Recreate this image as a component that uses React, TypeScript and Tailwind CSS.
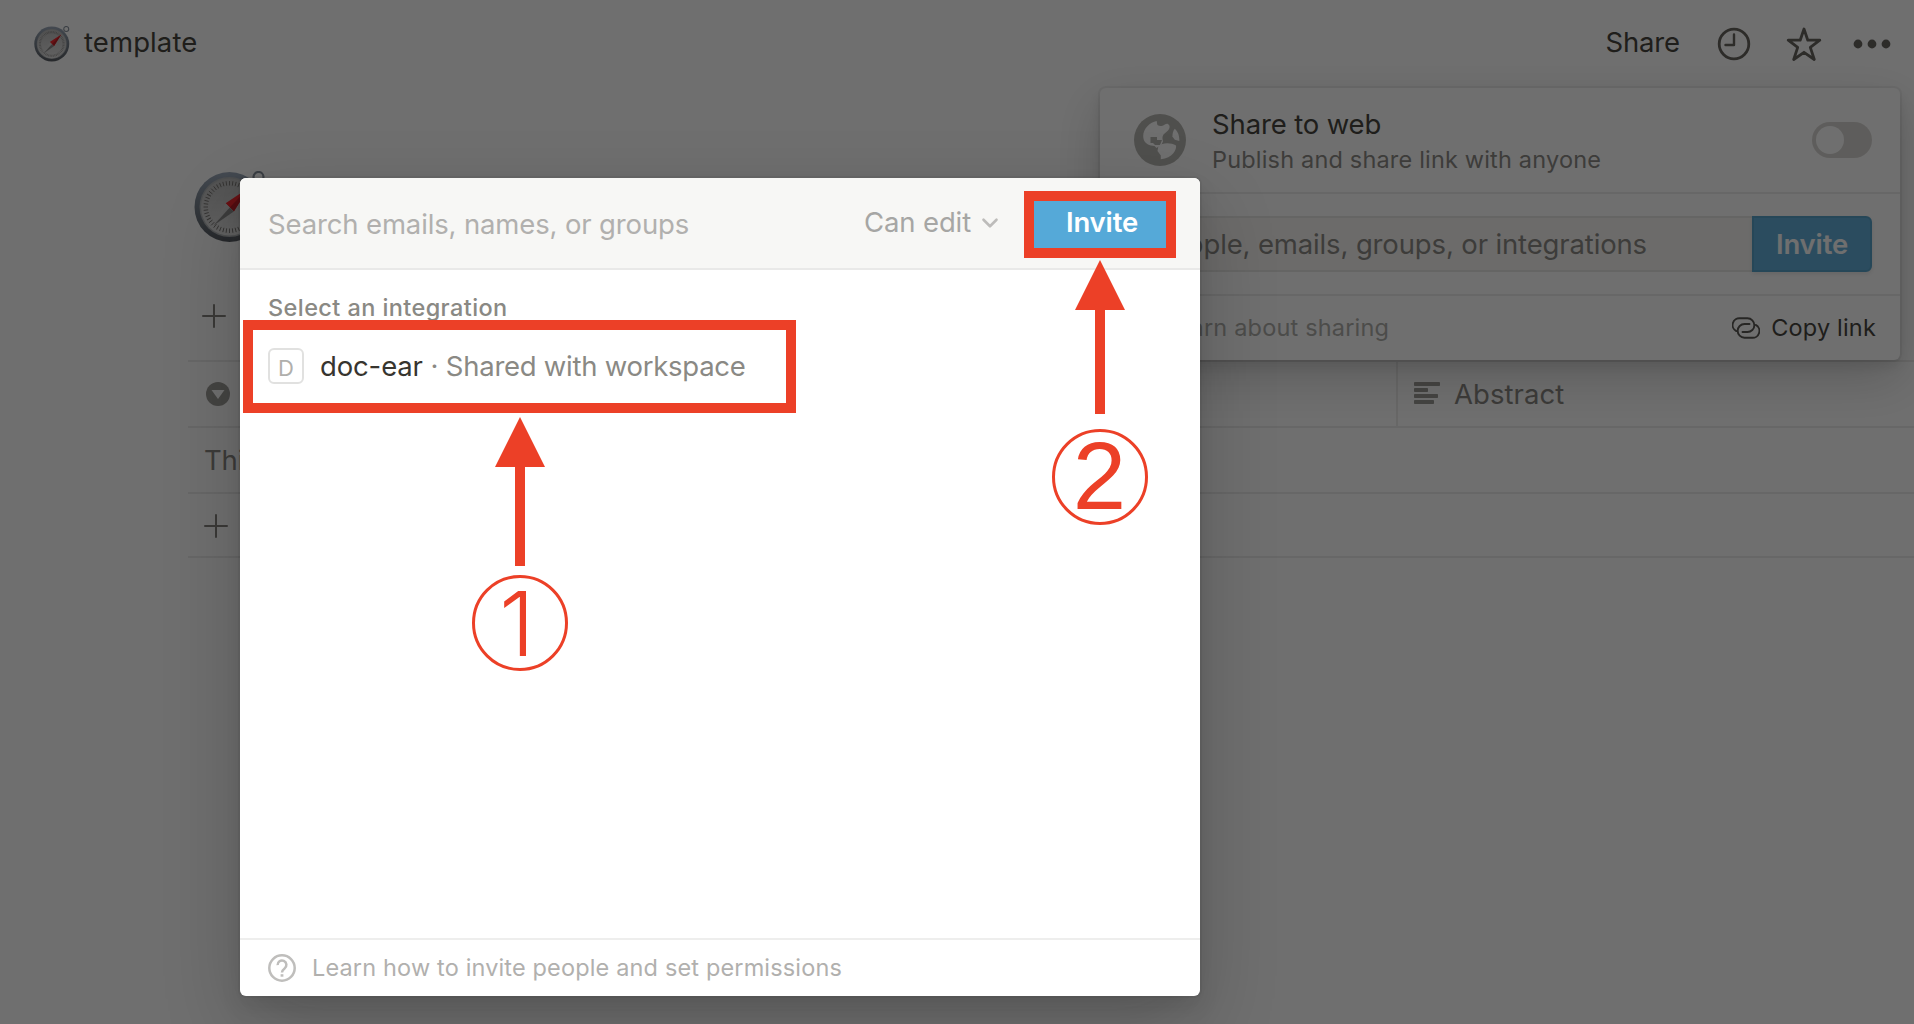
import { ChevronDown } from "lucide-react";

const body = "text-[27.5px] leading-[34px] tracking-[-0.14px] whitespace-nowrap";
const small = "text-[23.5px] leading-[29px] tracking-[0.18px] whitespace-nowrap";

function Compass({ id, className }: { id: string; className: string }) {
  const ticks = Array.from({ length: 48 }, (_, i) => i * 7.5);
  return (
    <svg viewBox="0 0 72 72" className={className}>
      <defs>
        <linearGradient id={`${id}-rim`} x1="0" y1="0" x2="0" y2="1">
          <stop offset="0" stopColor="#93a1b3" />
          <stop offset="0.45" stopColor="#6f7a87" />
          <stop offset="1" stopColor="#4a4f56" />
        </linearGradient>
        <linearGradient id={`${id}-face`} x1="0" y1="0" x2="0" y2="1">
          <stop offset="0" stopColor="#b5b5b5" />
          <stop offset="1" stopColor="#dcdcdc" />
        </linearGradient>
      </defs>
      <circle cx="64.5" cy="6" r="5" fill="none" stroke="#7d8793" strokeWidth="2.2" />
      <circle cx="35.5" cy="36" r="35" fill={`url(#${id}-rim)`} />
      <circle cx="35.5" cy="36" r="30" fill="#a9acae" />
      <circle cx="35.5" cy="36" r="28.5" fill={`url(#${id}-face)`} />
      {ticks.map((a) => (
        <line
          key={a}
          x1="35.5"
          y1="10"
          x2="35.5"
          y2="14.5"
          stroke="#6b6865"
          strokeWidth="0.9"
          transform={`rotate(${a} 35.5 36)`}
        />
      ))}
      <path d="M54.5 17 39.8 40.6 31.6 32.2Z" fill="#f0141c" />
      <path d="M54.5 17 39.8 40.6 35.7 36.4Z" fill="#b80c14" />
      <path d="M39.8 40.6 19.5 54.5 31.6 32.2Z" fill="#cfcfcf" />
      <path d="M39.8 40.6 19.5 54.5 35.7 36.4Z" fill="#808080" />
    </svg>
  );
}

function Plus() {
  return (
    <svg viewBox="0 0 24 24" className="h-6 w-6" stroke="#7a7873" strokeWidth="2" strokeLinecap="round">
      <path d="M12 1v22M1 12h22" />
    </svg>
  );
}

function Globe() {
  return (
    <svg viewBox="9 9 52 52" className="h-[52px] w-[52px]">
      <circle cx="35" cy="35" r="26" fill="#b0afaa" />
      <path
        d="M31.7 16 C25 17.2 18.2 23.5 18.2 31 C18.2 36 21 39.5 26 40.5 L29.5 41 L31.5 43 L34 41.2 L36 40.5 L38 36.5 C37.5 33 37 32.5 38.5 29.5 L43 25.5 C45 23.5 45.3 20.5 43 19 C41 18.2 39.5 20.2 37.5 20.7 C34.5 21.5 31.7 20.5 32 18Z"
        fill="#fff"
      />
      <path d="M25.5 32h6.5v3h5l-2 5h-5l-2-2h-2.500z" fill="#b0afaa" />
      <path d="M33.5 40.500C37 37.700 46 37 51 40.500C52 44 47.500 53.500 35.800 54.300V50.500L32.500 46Z" fill="#fff" />
      <path d="M49.700 23.800C53.500 27 54.500 32 54.300 36L49.800 34.700L47.400 31.500C47.500 28.500 48 26 49.700 23.800Z" fill="#fff" />
    </svg>
  );
}

function CopyIcon() {
  const half = "M4.3 14.1A6.8 6.8 0 0 1 8.2 1.300H15.500A6.850 6.850 0 0 1 15.500 15H10.500";
  return (
    <svg viewBox="0 0 28 22" className="h-[22px] w-7" fill="none" stroke="#4b4945" strokeWidth="1.9" strokeLinecap="round">
      <path d={half} />
      <path d={half} transform="rotate(180 14 11)" />
    </svg>
  );
}

function TopBar() {
  return (
    <header className="flex h-[84px] items-center justify-between pr-[23px] pl-[34px] text-[#37352f]">
      <div className="flex items-center">
        <Compass id="bar" className="mt-1 h-9 w-9" />
        <span className="ml-[14px] text-[27.5px] leading-[34px] tracking-[0.1px] whitespace-nowrap">template</span>
      </div>
      <div className="flex items-center">
        <span className={body}>Share</span>
        <svg viewBox="0 0 34 34" className="mt-1 ml-[37px] h-[34px] w-[34px]" fill="none" stroke="#5a5752" strokeWidth="2.800">
          <circle cx="17" cy="17" r="14.800" />
          <path d="M17 7.500V18H8.500" strokeLinecap="round" strokeLinejoin="round" strokeWidth="2.400" />
        </svg>
        <svg viewBox="0 0 36 36" className="mt-1 ml-[35px] h-9 w-9" fill="none" stroke="#5a5752" strokeWidth="2.800" strokeLinejoin="round">
          <path d="M18 3 21.800 14.200H33.800L24.300 21.400 28.300 33.500 18 26.300 7.700 33.500 11.700 21.400 2.200 14.200H14.200Z" />
        </svg>
        <svg viewBox="0 0 38 10" className="mt-1 ml-[31px] h-[10px] w-[38px]" fill="#5a5752">
          <circle cx="5" cy="5" r="4.400" />
          <circle cx="19" cy="5" r="4.400" />
          <circle cx="33" cy="5" r="4.400" />
        </svg>
      </div>
    </header>
  );
}

function Database() {
  return (
    <main className="pt-[87px] pl-[188px]">
      <Compass id="page" className="ml-[6px] h-[72px] w-[72px]" />
      <div className="flex h-[117px] items-end pb-8 pl-[14px]">
        <Plus />
      </div>
      <div className="border-t-2 border-[#ecebea] text-[#807d78]">
        <div className="flex h-[66px] border-b-2 border-[#ecebea]">
          <div className="flex w-[1210px] items-center border-r-2 border-[#ecebea] pl-[18px]">
            <svg viewBox="0 0 24 24" className="h-6 w-6">
              <circle cx="12" cy="12" r="12" fill="#95938e" />
              <path d="M5.500 8h13L12 17Z" fill="#fff" />
            </svg>
          </div>
          <div className="flex items-center pl-4">
            <svg viewBox="0 0 26 24" className="h-6 w-[26px]" fill="#95938e">
              <rect width="26" height="4" y="0" rx="0.800" />
              <rect width="14" height="4" y="6" rx="0.800" />
              <rect width="24" height="4" y="12" rx="0.800" />
              <rect width="20" height="4" y="18" rx="0.800" />
            </svg>
            <span className="ml-[14px] text-[27.5px] leading-[34px] tracking-[0.05px] whitespace-nowrap">Abstract</span>
          </div>
        </div>
        <div className="flex h-[66px] items-center border-b-2 border-[#ecebea] pl-4">
          <span className={body}>This</span>
        </div>
        <div className="flex h-16 items-center border-b-2 border-[#ecebea] pt-[2px] pl-4">
          <Plus />
        </div>
      </div>
    </main>
  );
}

function SharePopup() {
  return (
    <section className="absolute top-[88px] left-[1100px] flex h-[272px] w-[800px] flex-col rounded-md bg-white text-[#37352f] shadow-[0_0_0_2px_rgba(15,15,15,0.05),0_6px_12px_rgba(15,15,15,0.1),0_18px_48px_rgba(15,15,15,0.2)]">
      <div className="flex h-[106px] items-center border-b-2 border-[#ecebea] pr-7 pl-[34px]">
        <Globe />
        <div className="ml-[26px] flex flex-1 flex-col gap-1">
          <span className={body}>Share to web</span>
          <span className={`${small} text-[#83817c]`}>Publish and share link with anyone</span>
        </div>
        <div className="flex h-9 w-[60px] items-center rounded-full bg-[#d5d3cf] pl-1">
          <div className="h-7 w-7 rounded-full bg-white" />
        </div>
      </div>
      <div className="flex h-[102px] items-center border-b-2 border-[#ecebea] px-7">
        <div className="flex h-14 min-w-0 flex-1 items-center justify-end rounded-l-md border-2 border-r-0 border-[#e6e6e3] bg-[#f7f6f3] pr-[105px] text-[#83817c]">
          <span className={body}>Add people, emails, groups, or integrations</span>
        </div>
        <div className="flex h-14 w-[120px] shrink-0 items-center justify-center rounded-r-md border-2 border-[#4a9bc6] bg-[#55a9d8] text-white shadow-[0_2px_4px_rgba(15,15,15,0.1)]">
          <span className={`${body} font-semibold`}>Invite</span>
        </div>
      </div>
      <div className="flex flex-1 items-center justify-between pr-6 pb-[1px] pl-7">
        <div className="flex items-center gap-3">
          <svg viewBox="0 0 28 28" className="h-7 w-7" fill="none" stroke="#a8a7a3" strokeWidth="2.500">
            <circle cx="14" cy="14" r="12.700" />
          </svg>
          <span className={`${small} ml-[-5px] text-[#a8a7a3]`}>Learn about sharing</span>
        </div>
        <div className="flex items-center gap-[11px]">
          <CopyIcon />
          <span className={small}>Copy link</span>
        </div>
      </div>
    </section>
  );
}

function InviteModal() {
  return (
    <section className="absolute top-[178px] left-[240px] flex h-[818px] w-[960px] flex-col overflow-hidden rounded-md bg-white">
      <div className="flex h-[92px] items-center border-b-2 border-[#e9e9e8] bg-[#f7f7f5] pr-[28px] pl-7">
        <span className={`${body} mt-[1px] flex-1 text-[#b1b0ae]`}>Search emails, names, or groups</span>
        <span className={`${body} mb-[3px] text-[#a6a6a4]`}>Can edit</span>
        <ChevronDown className="mb-[1px] ml-[6px] h-[26px] w-[26px] text-[#bdbcba]" strokeWidth={2.400} />
        <div className="ml-[25px] flex h-14 w-[144px] items-center justify-center rounded-md bg-[#55a9d8] text-white">
          <span className={`${body} mb-[3px] ml-[4px] font-semibold`}>Invite</span>
        </div>
      </div>
      <div className="flex-1 px-7 pt-[23px]">
        <div className="text-[23.5px] leading-[29px] font-[550] tracking-[0.41px] whitespace-nowrap text-[#8a8984]">Select an integration</div>
        <div className="mt-[26px] flex h-9 items-center">
          <div className="flex h-9 w-9 items-center justify-center rounded-md border-2 border-[#e1e1e0] pt-1 text-[22px] leading-none text-[#b0afac]">D</div>
          <span className={`${body} ml-4 text-[#37352f]`}>doc-ear</span>
          <span className={`${body} w-[23px] text-center text-[#8a8984]`}>·</span>
          <span className="text-[27.5px] leading-[34px] tracking-[-0.26px] whitespace-nowrap text-[#8a8984]">Shared with workspace</span>
        </div>
      </div>
      <div className="flex h-[58px] items-center border-t-2 border-[#eeeeed] pl-7 text-[#b1b0ae]">
        <svg viewBox="0 0 28 28" className="h-7 w-7" fill="none" stroke="#bfbebc" strokeWidth="2.500">
          <circle cx="14" cy="14" r="12.700" />
          <path d="M9.600 11.200A4.400 4.400 0 1 1 16.600 14.400C14.900 15.700 14 16.500 14 18.500" />
          <path d="M14 20.200V22.700" strokeWidth="2.800" />
        </svg>
        <span className="mb-[2px] ml-4 text-[23.5px] leading-[29px] tracking-[0.15px] whitespace-nowrap">Learn how to invite people and set permissions</span>
      </div>
    </section>
  );
}

function Arrow({ length, className }: { length: number; className: string }) {
  return (
    <svg width="50" height={length} className={className} fill="#ec4027">
      <path d={`M25 0 50 50H30V${length}H20V50H0Z`} />
    </svg>
  );
}

function Annotations() {
  return (
    <>
      <div className="absolute top-[320px] left-[243px] h-[93px] w-[553px] border-[10px] border-[#ec4027]" />
      <div className="absolute top-[191px] left-[1024px] h-[67px] w-[152px] border-[10px] border-[#ec4027]" />
      <div className="absolute top-[417px] left-[472px] flex w-24 flex-col items-center">
        <Arrow length={149} className="block" />
        <div className="mt-[9px] flex h-24 w-24 items-center justify-center rounded-full border-[3px] border-[#ec4027] text-[#ec4027]">
          <span className="mt-[2px] mr-[6px] text-[90px] leading-[90px] font-[350]">1</span>
        </div>
      </div>
      <div className="absolute top-[260px] left-[1052px] flex w-24 flex-col items-center">
        <Arrow length={154} className="block" />
        <div className="mt-[15px] flex h-24 w-24 items-center justify-center rounded-full border-[3px] border-[#ec4027] text-[#ec4027]">
          <span className="mr-[1px] mb-[2px] font-['Liberation_Sans'] text-[96px] leading-[90px]">2</span>
        </div>
      </div>
    </>
  );
}

export default function App() {
  return (
    <div className="relative h-[1024px] w-[1914px] overflow-hidden bg-white font-[Inter,sans-serif]">
      <TopBar />
      <Database />
      <SharePopup />
      <div className="absolute inset-0 bg-[rgba(15,15,15,0.6)]" />
      <div className="absolute top-[178px] left-[240px] h-[818px] w-[960px] rounded-md shadow-[0_0_0_2px_rgba(15,15,15,0.05),0_10px_20px_rgba(15,15,15,0.1),0_30px_80px_rgba(15,15,15,0.2)]" />
      <InviteModal />
      <Annotations />
    </div>
  );
}
